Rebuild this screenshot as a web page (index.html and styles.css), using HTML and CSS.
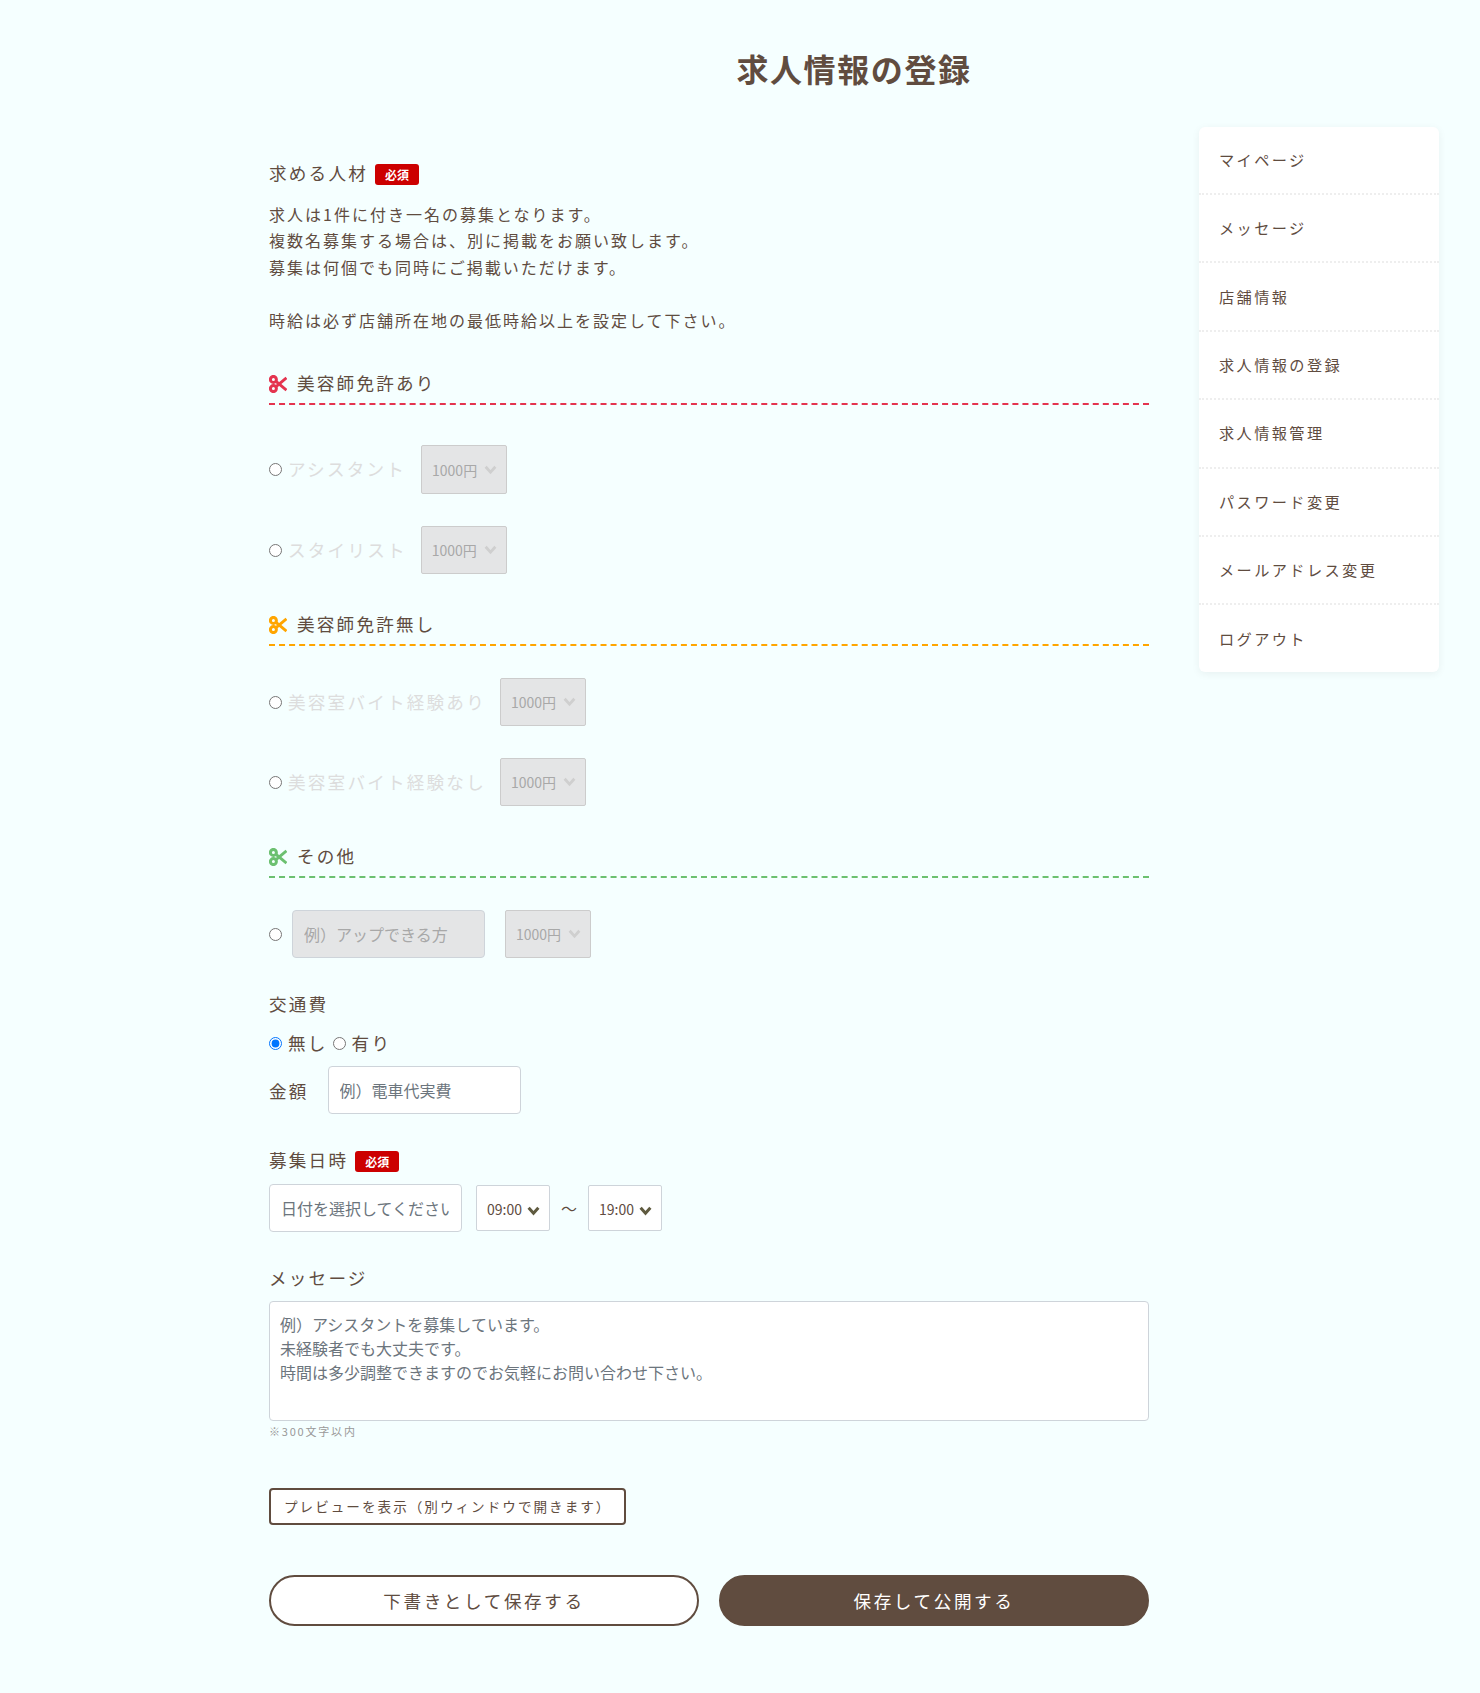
FILE: index.html
```html
<!DOCTYPE html>
<html lang="ja">
  <head>
    <meta charset="UTF-8" />
    <meta name="viewport" content="width=device-width, initial-scale=1.0" />
    <title>求人情報の登録</title>
    <link rel="stylesheet" href="styles.css">
  </head>
  <body>
    <svg class="sprite" width="0" height="0">
      <symbol id="scissors" viewBox="0 0 18 18">
        <circle cx="4.4" cy="4.4" r="3" />
        <circle cx="4.4" cy="13.6" r="3" />
        <path d="M7 6.4 17.5 15.2M7 11.6 17.5 2.8" />
      </symbol>
    </svg>
    <div class="wrapper">
      <h1 class="page-title">求人情報の登録</h1>
      <div class="columns">
        <form class="job-form">
          <p class="field-label first-label">求める人材<span class="required">必須</span></p>
          <p class="notes">求人は1件に付き一名の募集となります。<br>複数名募集する場合は、別に掲載をお願い致します。<br>募集は何個でも同時にご掲載いただけます。<br><br>時給は必ず店舗所在地の最低時給以上を設定して下さい。</p>

          <h2 class="section-title red"><svg class="icon"><use href="#scissors" /></svg>美容師免許あり</h2>
          <div class="job-row first">
            <label class="job-label"><input type="radio" name="job">アシスタント</label>
            <select class="wage tall" disabled><option>1000円</option></select>
          </div>
          <div class="job-row">
            <label class="job-label"><input type="radio" name="job">スタイリスト</label>
            <select class="wage" disabled><option>1000円</option></select>
          </div>

          <h2 class="section-title orange"><svg class="icon"><use href="#scissors" /></svg>美容師免許無し</h2>
          <div class="job-row">
            <label class="job-label"><input type="radio" name="job">美容室バイト経験あり</label>
            <select class="wage" disabled><option>1000円</option></select>
          </div>
          <div class="job-row">
            <label class="job-label"><input type="radio" name="job">美容室バイト経験なし</label>
            <select class="wage" disabled><option>1000円</option></select>
          </div>

          <h2 class="section-title green"><svg class="icon"><use href="#scissors" /></svg>その他</h2>
          <div class="job-row free">
            <input type="radio" name="job">
            <input class="text-input" type="text" placeholder="例）アップできる方" disabled>
            <select class="wage" disabled><option>1000円</option></select>
          </div>

          <p class="field-label transport">交通費</p>
          <div class="radio-group">
            <label><input type="radio" name="fare" checked>無し</label>
            <label><input type="radio" name="fare">有り</label>
          </div>
          <div class="amount-row">
            <span class="amount-label">金額</span>
            <input class="text-input" type="text" placeholder="例）電車代実費">
          </div>

          <p class="field-label date-label">募集日時<span class="required">必須</span></p>
          <div class="date-row">
            <input class="text-input" type="text" placeholder="日付を選択してください">
            <select class="time"><option>09:00</option></select>
            <span class="tilde">〜</span>
            <select class="time"><option>19:00</option></select>
          </div>

          <p class="field-label message-label">メッセージ</p>
          <textarea class="message" placeholder="例）アシスタントを募集しています。&#10;未経験者でも大丈夫です。&#10;時間は多少調整できますのでお気軽にお問い合わせ下さい。"></textarea>
          <small class="limit">※300文字以内</small>

          <button type="button" class="preview">プレビューを表示（別ウィンドウで開きます）</button>

          <div class="actions">
            <button type="button" class="btn btn-draft">下書きとして保存する</button>
            <button type="submit" class="btn btn-publish">保存して公開する</button>
          </div>
        </form>

        <ul class="side-menu">
          <li>マイページ</li>
          <li>メッセージ</li>
          <li>店舗情報</li>
          <li>求人情報の登録</li>
          <li>求人情報管理</li>
          <li>パスワード変更</li>
          <li>メールアドレス変更</li>
          <li>ログアウト</li>
        </ul>
      </div>
    </div>
  </body>
</html>
```

FILE: styles.css
```css
:root {
  --brown: #604c3f;
  --line: #ced4da;
  --disabled: #e4e5e6;
}
* {
  box-sizing: border-box;
}
body {
  margin: 0;
  background-color: #f5ffff;
  color: var(--brown);
  font-family: "Noto Sans CJK JP", "Noto Sans", sans-serif;
  font-size: 16px;
}
.sprite {
  position: absolute;
}
.wrapper {
  margin: 0 41px 0 269px;
  padding-bottom: 67px;
}
.page-title {
  margin: 0;
  padding-top: 45px;
  height: 127px;
  text-align: center;
  font-size: 32px;
  line-height: 46px;
  font-weight: 700;
  letter-spacing: 1.6px;
}
.columns {
  display: flex;
  justify-content: space-between;
  align-items: flex-start;
}
.job-form {
  width: 880px;
}
.field-label {
  margin: 0;
  padding-top: 35px;
  font-size: 17.6px;
  line-height: 24px;
  letter-spacing: 2.2px;
}
.first-label {
  padding-top: 34px;
}
.required {
  display: inline-block;
  width: 44px;
  height: 21px;
  margin-left: 7px;
  border-radius: 3px;
  background-color: #cc0000;
  color: #fff;
  font-size: 12px;
  font-weight: 700;
  line-height: 21px;
  text-align: center;
  letter-spacing: 0;
}
.notes {
  margin: 16px 0 0;
  line-height: 26.4px;
  letter-spacing: 2px;
}
.section-title {
  display: flex;
  align-items: center;
  gap: 10px;
  height: 38px;
  margin: 34px 0 0;
  padding-bottom: 6px;
  border-bottom: 2px dashed;
  font-size: 17.6px;
  font-weight: 400;
  color: var(--brown);
  letter-spacing: 2.2px;
}
.icon {
  width: 18px;
  height: 18px;
  margin-top: 3px;
  fill: none;
  stroke: currentColor;
  stroke-width: 3;
}
.section-title.red { border-color: #e4344f; }
.section-title.red .icon { color: #e4344f; }
.section-title.orange { border-color: #ffa500; }
.section-title.orange .icon { color: #ffa500; }
.section-title.green { border-color: #6cc070; }
.section-title.green .icon { color: #6cc070; }

.job-row {
  display: flex;
  align-items: center;
  gap: 14px;
  margin-top: 32px;
}
.job-row.first {
  margin-top: 40px;
}
.job-row.free {
  gap: 8px;
}
.job-row.free .text-input {
  margin-right: 12px;
}
.job-label {
  display: flex;
  align-items: center;
  padding-bottom: 2px;
  font-size: 17.6px;
  color: #dddddd;
  letter-spacing: 2.2px;
}
input[type="radio"] {
  width: 13px;
  height: 13px;
  margin: 0 6px 0 0;
  accent-color: #0075ff;
}
.job-label input[type="radio"] {
  margin-top: 2px;
}
.job-row.free input[type="radio"] {
  margin-right: 2px;
}
select,
.text-input,
.message {
  border: 1px solid var(--line);
  font-family: inherit;
}
select {
  appearance: none;
  height: 48px;
  padding: 0 24px 0 10px;
  font-size: 14px;
  background-repeat: no-repeat;
  background-position: right 9px center;
  background-size: 13px 10px;
}
.wage {
  width: 86px;
  border-radius: 2px;
  background-color: var(--disabled);
  border-color: #cccccc;
  color: #a8a8a8;
  opacity: 1;
  background-image: url("data:image/svg+xml,%3Csvg xmlns='http://www.w3.org/2000/svg' viewBox='0 0 12 9'%3E%3Cpath d='M1.5 1.5 6 6.5l4.5-5' fill='none' stroke='%23cfcfcf' stroke-width='2.6'/%3E%3C/svg%3E");
}
.wage.tall {
  height: 49px;
  margin-left: 1px;
}
.time {
  width: 74px;
  height: 46px;
  padding-top: 2px;
  border-radius: 2px;
  background-color: #fff;
  color: var(--brown);
  background-position: right 9px top 20px;
  background-image: url("data:image/svg+xml,%3Csvg xmlns='http://www.w3.org/2000/svg' viewBox='0 0 12 9'%3E%3Cpath d='M1.5 1.5 6 6.5l4.5-5' fill='none' stroke='%235f5a3f' stroke-width='2.8'/%3E%3C/svg%3E");
}
.text-input {
  width: 193px;
  height: 48px;
  padding: 0 11px;
  border-radius: 4px;
  background-color: #fff;
  font-size: 16px;
}
.text-input::placeholder,
.message::placeholder {
  color: #6c757d;
  opacity: 1;
}
.text-input:disabled {
  background-color: var(--disabled);
}
.text-input:disabled::placeholder {
  color: #a8a8a8;
}
.transport {
  padding-top: 34px;
}
.radio-group {
  display: flex;
  gap: 5px;
  margin-top: 15px;
  font-size: 17.6px;
  letter-spacing: 2.2px;
  line-height: 24px;
}
.radio-group label {
  display: flex;
  align-items: center;
}
.amount-row {
  display: flex;
  align-items: center;
  gap: 19px;
  margin-top: 11px;
}
.amount-label {
  font-size: 17.6px;
  letter-spacing: 2.2px;
}
.date-label {
  padding-top: 34px;
}
.date-row {
  display: flex;
  align-items: center;
  margin-top: 12px;
}
.date-row .text-input {
  margin-right: 14px;
}
.tilde {
  width: 38px;
  text-align: center;
}
.message-label {
  padding-top: 34px;
}
.message {
  display: block;
  width: 100%;
  height: 120px;
  margin-top: 11px;
  padding: 10px;
  border-radius: 4px;
  background-color: #fff;
  font-size: 16px;
  line-height: 24px;
  resize: none;
}
.limit {
  display: block;
  margin-top: 3px;
  font-size: 11px;
  line-height: 15px;
  letter-spacing: 1.8px;
  color: #999999;
}
.preview {
  display: block;
  width: 357px;
  height: 37px;
  margin-top: 49px;
  padding: 0 0 2px 13px;
  border: 2px solid var(--brown);
  border-radius: 4px;
  background-color: #fff;
  color: var(--brown);
  font-family: inherit;
  font-size: 13.6px;
  letter-spacing: 2px;
  text-align: left;
}
.actions {
  display: flex;
  gap: 20px;
  margin-top: 50px;
}
.btn {
  flex: 1;
  height: 51px;
  border: 2px solid var(--brown);
  border-radius: 26px;
  font-family: inherit;
  font-size: 17.6px;
  letter-spacing: 2.6px;
}
.btn-draft {
  background-color: #fff;
  color: var(--brown);
}
.btn-publish {
  background-color: var(--brown);
  color: #fff;
}
.side-menu {
  width: 240px;
  margin: 0;
  padding: 0;
  list-style: none;
  background-color: #fff;
  border-radius: 6px;
  box-shadow: 0 2px 8px rgba(0, 0, 0, 0.06);
}
.side-menu li {
  display: flex;
  align-items: center;
  height: 68.4px;
  padding: 0 0 2px 20px;
  border-bottom: 2px dotted #eeeeee;
  font-size: 15.2px;
  letter-spacing: 2.4px;
}
.side-menu li:first-child {
  height: 68px;
}
.side-menu li:last-child {
  height: 66.4px;
  border-bottom: 0;
}
```
